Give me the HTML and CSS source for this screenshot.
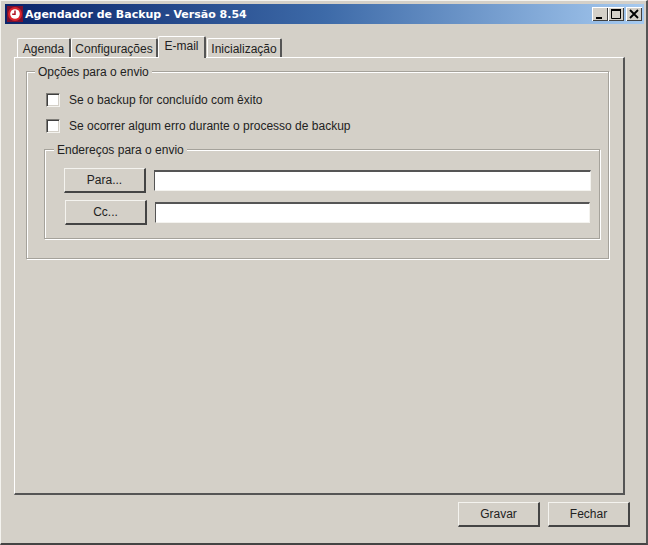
FILE: index.html
```html
<!DOCTYPE html>
<html lang="pt">
<head>
<meta charset="utf-8">
<title>Agendador de Backup</title>
<link rel="stylesheet" href="styles.css">
</head>
<body>
<div class="window">
  <header class="titlebar">
    <svg class="app-icon" width="16" height="16" viewBox="0 0 16 16"><rect x="0" y="0" width="16" height="16" fill="#7a1030"/><circle cx="8" cy="8" r="7" fill="#d8232a"/><circle cx="8" cy="8" r="4.8" fill="#fff"/><path d="M8 4.6V8.3H5.2" fill="none" stroke="#b01020" stroke-width="1.5"/></svg>
    <span class="title-text">Agendador de Backup - Versão 8.54</span>
    <div class="controls">
      <span class="ctl"><svg width="16" height="14" viewBox="0 0 16 14"><rect x="4" y="10" width="6" height="2" fill="#000"/></svg></span>
      <span class="ctl"><svg width="16" height="14" viewBox="0 0 16 14"><path d="M3.5 3.5H12.5V11.5H3.5Z M3 2.5H13" fill="none" stroke="#000"/><rect x="3" y="2" width="10" height="2" fill="#000"/></svg></span>
      <span class="ctl ctl-close"><svg width="16" height="14" viewBox="0 0 16 14"><path d="M4 3L12 11M12 3L4 11" fill="none" stroke="#000" stroke-width="1.8"/></svg></span>
    </div>
  </header>
  <nav class="tabs">
    <span class="tab tab-agenda">Agenda</span>
    <span class="tab tab-config">Configurações</span>
    <span class="tab tab-active">E-mail</span>
    <span class="tab tab-init">Inicialização</span>
  </nav>
  <main class="panel">
    <section class="group group-outer">
      <span class="legend legend-outer">Opções para o envio</span>
      <label class="check check-first"><span class="box"></span>Se o backup for concluído com êxito</label>
      <label class="check check-second"><span class="box"></span>Se ocorrer algum erro durante o processo de backup</label>
      <section class="group group-inner">
        <span class="legend legend-inner">Endereços para o envio</span>
        <div class="addr addr-para"><button class="btn btn-addr">Para...</button><input class="field" type="text"></div>
        <div class="addr addr-cc"><button class="btn btn-addr">Cc...</button><input class="field" type="text"></div>
      </section>
    </section>
  </main>
  <footer class="actions">
    <button class="btn btn-action">Gravar</button>
    <button class="btn btn-action">Fechar</button>
  </footer>
</div>
</body>
</html>
```
FILE: styles.css
```css
* { box-sizing: border-box; }
html, body { margin: 0; padding: 0; }
body { width: 648px; height: 545px; overflow: hidden; background: #d4d0c8; font-family: "Liberation Sans", Arial, sans-serif; font-size: 12px; color: #222; }
.window { width: 648px; height: 545px; padding: 4px 4px 0 5px; border-left: 1px solid #f4f3ef; border-top: 1px solid #f4f3ef; border-right: 2px solid #555; border-bottom: 2px solid #444; }
.window { padding: 3px 2px 0 4px; }

.titlebar { height: 20px; display: flex; align-items: center; padding: 0 2px; background: linear-gradient(90deg, #0a246a 0%, #3d6aa8 50%, #a6caf0 100%); }
.app-icon { flex: none; margin-right: 2px; }
.title-text { font-weight: 700; font-size: 12.4px; color: #fff; white-space: nowrap; font-family: "DejaVu Sans", sans-serif; font-size: 11px; }
.controls { margin-left: auto; display: flex; margin-right: 0; }
.ctl { width: 16px; height: 14px; display: block; background: #d4d0c8; box-shadow: inset 1px 1px 0 #fff, inset -1px -1px 0 #404040; }
.ctl svg { display: block; }
.ctl-close { margin-left: 2px; }

.tabs { display: flex; align-items: flex-end; height: 33px; margin-left: 12px; }
.tab { display: block; height: 19px; padding-top: 3px; text-align: center; white-space: nowrap; border-top: 1px solid #fff; border-left: 1px solid #fff; border-right: 2px solid #555; border-radius: 2px 2px 0 0; font-size: 12px; }
.tab-agenda { width: 54px; }
.tab-config { width: 87px; }
.tab-active { width: 48px; height: 22px; padding-top: 2px; position: relative; z-index: 1; margin-bottom: -1px; background: #d4d0c8; margin-right: 1px; }
.tab-init { width: 75px; }

.panel { width: 611px; height: 438px; margin-left: 9px; padding: 13px 0 0 11px; border: 1px solid; border-color: #fff #555 #555 #fff; border-width: 1px 2px 2px 1px; }

.group { position: relative; border: 1px solid #a5a29b; box-shadow: 1px 1px 0 #fff, inset 1px 1px 0 #fff; }
.group-outer { width: 583px; height: 188px; padding: 21px 0 0 19px; }
.group-inner { width: 556px; height: 90px; margin: 16px 0 0 -2px; padding: 18px 0 0 19px; }
.legend { position: absolute; top: -7px; background: #d4d0c8; padding: 0 3px; line-height: 14px; white-space: nowrap; }
.legend-outer { left: 8px; }
.legend-inner { left: 9px; }

.check { display: flex; align-items: center; height: 14px; line-height: 14px; }
.check-second { margin-top: 12px; }
.box { flex: none; width: 14px; height: 14px; margin-right: 9px; background: #fff; border: 1px solid; border-color: #7f7d78 #f4f3ef #f4f3ef #7f7d78; box-shadow: inset 1px 1px 0 #404040, inset -1px -1px 0 #d4d0c8; }

.addr { display: flex; align-items: center; height: 25px; }
.addr-cc { margin-top: 7px; margin-left: 1px; }
.btn { font: inherit; color: #222; background: #d4d0c8; padding: 0; border: 1px solid; border-color: #f4f3ef #444 #444 #f4f3ef; border-width: 1px 2px 2px 1px; }
.btn-addr { width: 82px; height: 25px; }
.field { flex: none; width: 437px; height: 21px; margin-left: 8px; background: #fff; border: 1px solid; border-color: #555 #f4f3ef #f4f3ef #555; border-top-width: 2px; padding: 0; }
.addr-cc .field { width: 435px; }

.actions { display: flex; justify-content: flex-end; gap: 8px; margin-top: 7px; margin-right: 14px; }
.btn-action { width: 82px; height: 25px; }
```
